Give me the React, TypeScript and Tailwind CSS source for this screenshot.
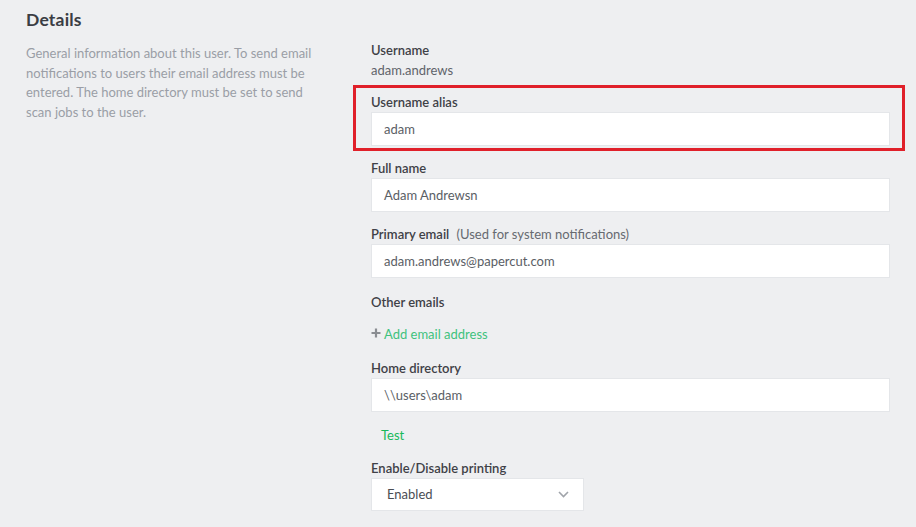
import React from "react";

const font = { fontFamily: "Lato, 'Noto Sans', sans-serif" };

function Label({ children }: { children: React.ReactNode }) {
  return (
    <div className="text-[13px] leading-[20px] font-semibold text-[#3f4147]">{children}</div>
  );
}

function Input({ value }: { value: string }) {
  return (
    <div className="h-[34px] w-full bg-white border border-[#e4e6e9] flex items-center pl-[12px] pt-[2px] text-[13px] text-[#5a5e65]">
      {value}
    </div>
  );
}

export default function App() {
  return (
    <div className="min-h-[527px] w-[916px] bg-[#eeeff1] px-[26px] pt-[8px]" style={font}>
      <h2 className="text-[17.5px] leading-[24px] font-bold tracking-[0.2px] text-[#3a3d44]">Details</h2>
      <div className="flex mt-[8px]">
        <div className="w-[345px] shrink-0 pt-[4px] pr-[40px]">
          <p className="text-[13px] leading-[19.5px] text-[#9a9ea6]">
            General information about this user. To send email notifications to users their email address must be entered. The home directory must be set to send scan jobs to the user.
          </p>
        </div>
        <div className="flex-1 flex flex-col">
          <Label>Username</Label>
          <div className="text-[13px] leading-[20px] text-[#5f636a]">adam.andrews</div>
          <div className="relative mt-[12px]">
            <div className="absolute -left-[18px] -right-[15px] -top-[7px] -bottom-[5px] border-[3px] border-[#e0202a] pointer-events-none" />
            <Label>Username alias</Label>
            <Input value="adam" />
          </div>
          <div className="mt-[12px]">
            <Label>Full name</Label>
            <Input value="Adam Andrewsn" />
          </div>
          <div className="mt-[12px]">
            <Label>
              Primary email <span className="font-normal text-[#666a70] ml-[4px]">(Used for system notifications)</span>
            </Label>
            <Input value="adam.andrews@papercut.com" />
          </div>
          <div className="mt-[14px]">
            <Label>Other emails</Label>
          </div>
          <div className="mt-[13px] flex items-center h-[20px] text-[13px]">
            <svg width="10" height="10" viewBox="0 0 10 10" className="mr-[3px] -mt-[4px]">
              <path d="M5 0.5v9M0.5 5h9" stroke="#8a8d92" strokeWidth="2.2" />
            </svg>
            <span className="text-[#3fc27d]">Add email address</span>
          </div>
          <div className="mt-[13px]">
            <Label>Home directory</Label>
            <Input value="\\users\adam" />
          </div>
          <div className="mt-[13px] pl-[10px] text-[13px] leading-[20px] text-[#17b95a]">Test</div>
          <div className="mt-[13px]">
            <Label>Enable/Disable printing</Label>
            <div className="h-[33px] w-[213px] bg-white border border-[#e4e6e9] flex items-center justify-between pl-[15px] pr-[14px] text-[13px] text-[#4a4d53]">
              <span>Enabled</span>
              <svg width="11" height="7" viewBox="0 0 11 7">
                <path d="M1 1l4.5 4.5L10 1" fill="none" stroke="#a0a4aa" strokeWidth="1.6" />
              </svg>
            </div>
          </div>
        </div>
      </div>
    </div>
  );
}
